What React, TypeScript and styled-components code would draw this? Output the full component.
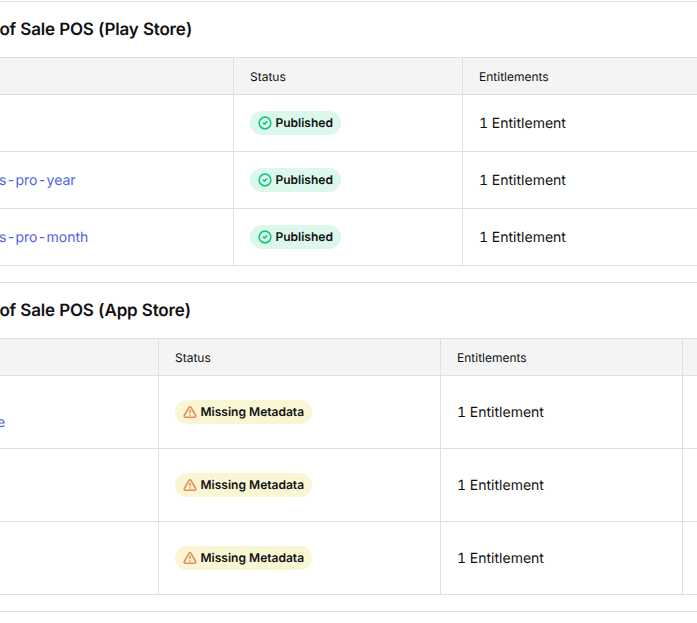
import * as React from 'react';
import styled, { createGlobalStyle } from 'styled-components';
import { CircleCheck, TriangleAlert } from 'lucide-react';

const GlobalStyle = createGlobalStyle`
  *, *::before, *::after {
    box-sizing: border-box;
  }
  html, body {
    margin: 0;
    padding: 0;
    background: #ffffff;
  }
  body {
    font-family: Inter, 'Liberation Sans', sans-serif;
    font-feature-settings: 'tnum';
    text-rendering: geometricPrecision;
    color: #111113;
    overflow: hidden;
  }
`;

// the page in the shot is scrolled sideways, so the left of it is cut off
const Viewport = styled.div`
  width: 697px;
  height: 623px;
  overflow: hidden;
`;

const Canvas = styled.main`
  width: 761px;
  margin-left: -64px;
  padding-top: 1px;
`;

const Section = styled.section`
  border-top: 1px solid #e0e0e0;
  padding-bottom: 16px;
`;

const Title = styled.h2`
  display: flex;
  align-items: center;
  height: 55px;
  margin: 0;
  padding-left: 18px;
  font-size: 17px;
  font-weight: 600;
  letter-spacing: -0.2px;
`;

const Table = styled.div`
  border-top: 1px solid #e0e0e0;
`;

const Row = styled.div<{ $cols: string; $height: number }>`
  display: grid;
  grid-template-columns: ${(p) => p.$cols};
  height: ${(p) => p.$height}px;
  border-bottom: 1px solid #e0e0e0;
`;

const HeaderRow = styled(Row)`
  background: #f4f4f4;
`;

const Cell = styled.div`
  display: flex;
  flex-direction: column;
  justify-content: center;
  align-items: flex-start;
  min-width: 0;
  padding: 2px 16px 0;
  border-right: 1px solid #e0e0e0;
  font-size: 14px;
  line-height: 20px;

  &:last-child {
    border-right: none;
  }
`;

const HeadCell = styled(Cell)`
  font-size: 12px;
`;

const BadgeCell = styled(Cell)`
  padding-top: 0;
`;

const ProductLink = styled.a`
  color: #5163e0;
  text-decoration: none;
  white-space: nowrap;
`;

const Badge = styled.span<{ $tone: 'ok' | 'warn' }>`
  display: inline-flex;
  align-items: center;
  gap: 3.5px;
  height: 24px;
  padding: 0 8px;
  border-radius: 12px;
  background: ${(p) => (p.$tone === 'ok' ? '#dcf7ec' : '#f9f6d4')};
  font-size: 12px;
  font-weight: 600;
  white-space: nowrap;

  svg {
    flex: none;
    color: ${(p) => (p.$tone === 'ok' ? '#12c97a' : '#ea8a5e')};
  }
`;

const playCols = '298px 229px 1fr';
const appCols = '223px 282px 242px 1fr';

const playRows = [
  { name: 'Pro', link: '' },
  { name: '', link: 'invoices-pro-year' },
  { name: '', link: 'invoices-pro-month' },
];

const appRows = [
  { name: 'Pro', link: 'pos-life' },
  { name: 'Pro', link: '' },
  { name: 'Pro', link: '' },
];

const Published = () => (
  <Badge $tone="ok">
    <CircleCheck size={14} strokeWidth={2.75} />
    Published
  </Badge>
);

const MissingMetadata = () => (
  <Badge $tone="warn">
    <TriangleAlert size={14} strokeWidth={2.75} />
    Missing Metadata
  </Badge>
);

const App: React.FC = () => (
  <Viewport>
    <GlobalStyle />
    <Canvas>
      <Section>
        <Title>Point of Sale POS (Play Store)</Title>
        <Table>
          <HeaderRow $cols={playCols} $height={37}>
            <HeadCell>Product</HeadCell>
            <HeadCell>Status</HeadCell>
            <HeadCell>Entitlements</HeadCell>
          </HeaderRow>
          {playRows.map((row, i) => (
            <Row key={i} $cols={playCols} $height={57}>
              <Cell>
                {row.name}
                {row.link && <ProductLink href="#">{row.link}</ProductLink>}
              </Cell>
              <BadgeCell>
                <Published />
              </BadgeCell>
              <Cell>1 Entitlement</Cell>
            </Row>
          ))}
        </Table>
      </Section>
      <Section>
        <Title>Point of Sale POS (App Store)</Title>
        <Table>
          <HeaderRow $cols={appCols} $height={37}>
            <HeadCell>Product</HeadCell>
            <HeadCell>Status</HeadCell>
            <HeadCell>Entitlements</HeadCell>
            <HeadCell />
          </HeaderRow>
          {appRows.map((row, i) => (
            <Row key={i} $cols={appCols} $height={73}>
              <Cell>
                {row.name}
                {row.link && <ProductLink href="#">{row.link}</ProductLink>}
              </Cell>
              <BadgeCell>
                <MissingMetadata />
              </BadgeCell>
              <Cell>1 Entitlement</Cell>
              <Cell />
            </Row>
          ))}
        </Table>
      </Section>
      <Section />
    </Canvas>
  </Viewport>
);

export default App;
